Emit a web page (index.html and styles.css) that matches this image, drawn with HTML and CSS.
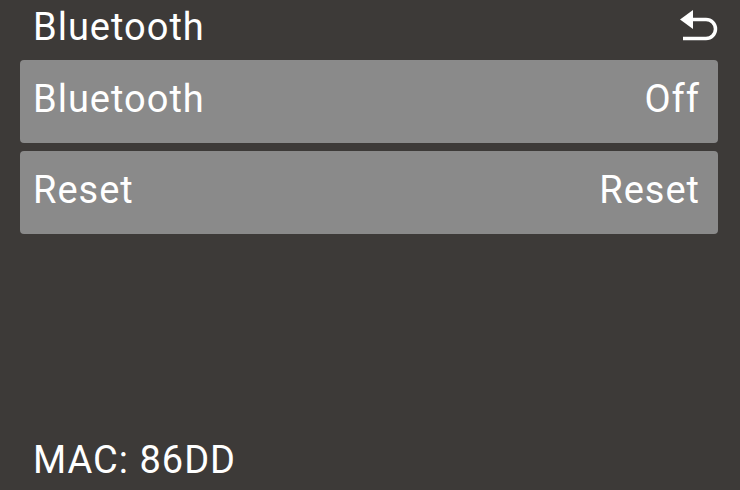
FILE: index.html
```html
<!DOCTYPE html>
<html lang="en">
  <head>
    <meta charset="UTF-8" />
    <title>Bluetooth</title>
    <link rel="stylesheet" href="styles.css">
  </head>
  <body>
    <div class="screen">
      <div class="header">
        <span class="title">Bluetooth</span>
        <svg class="back" width="42" height="34" viewBox="678 8 42 34">
          <polygon points="680,19.5 693,10 693,29" fill="#fff" />
          <path d="M692 19.5 H706 A9.5 9.5 0 0 1 706 38.5 H683" fill="none" stroke="#fff" stroke-width="3.5" />
        </svg>
      </div>
      <div class="list">
        <div class="row">
          <span>Bluetooth</span>
          <span>Off</span>
        </div>
        <div class="row">
          <span>Reset</span>
          <span>Reset</span>
        </div>
      </div>
      <div class="footer">MAC: 86DD</div>
    </div>
  </body>
</html>
```

FILE: styles.css
```css
body {
  margin: 0;
  background: #3d3a38;
  color: #fff;
  font-family: Roboto, "Liberation Sans", sans-serif;
  font-size: 38px;
  letter-spacing: 1px;
}
.screen {
  height: 490px;
  display: flex;
  flex-direction: column;
  overflow: hidden;
}
.header {
  display: flex;
  justify-content: space-between;
  align-items: flex-start;
  padding: 5px 20px 0 33px;
  height: 55px;
  line-height: 44px;
}
.back {
  margin-top: 3px;
}
.list {
  display: flex;
  flex-direction: column;
  gap: 8px;
  margin: 0 22px 0 20px;
}
.row {
  display: flex;
  justify-content: space-between;
  align-items: center;
  height: 83px;
  box-sizing: border-box;
  padding: 0 18px 5px 13px;
  background: #8a8a8a;
  border-radius: 4px;
  line-height: 44px;
}
.footer {
  margin-top: auto;
  padding: 0 0 8px 33px;
  line-height: 44px;
}
```
